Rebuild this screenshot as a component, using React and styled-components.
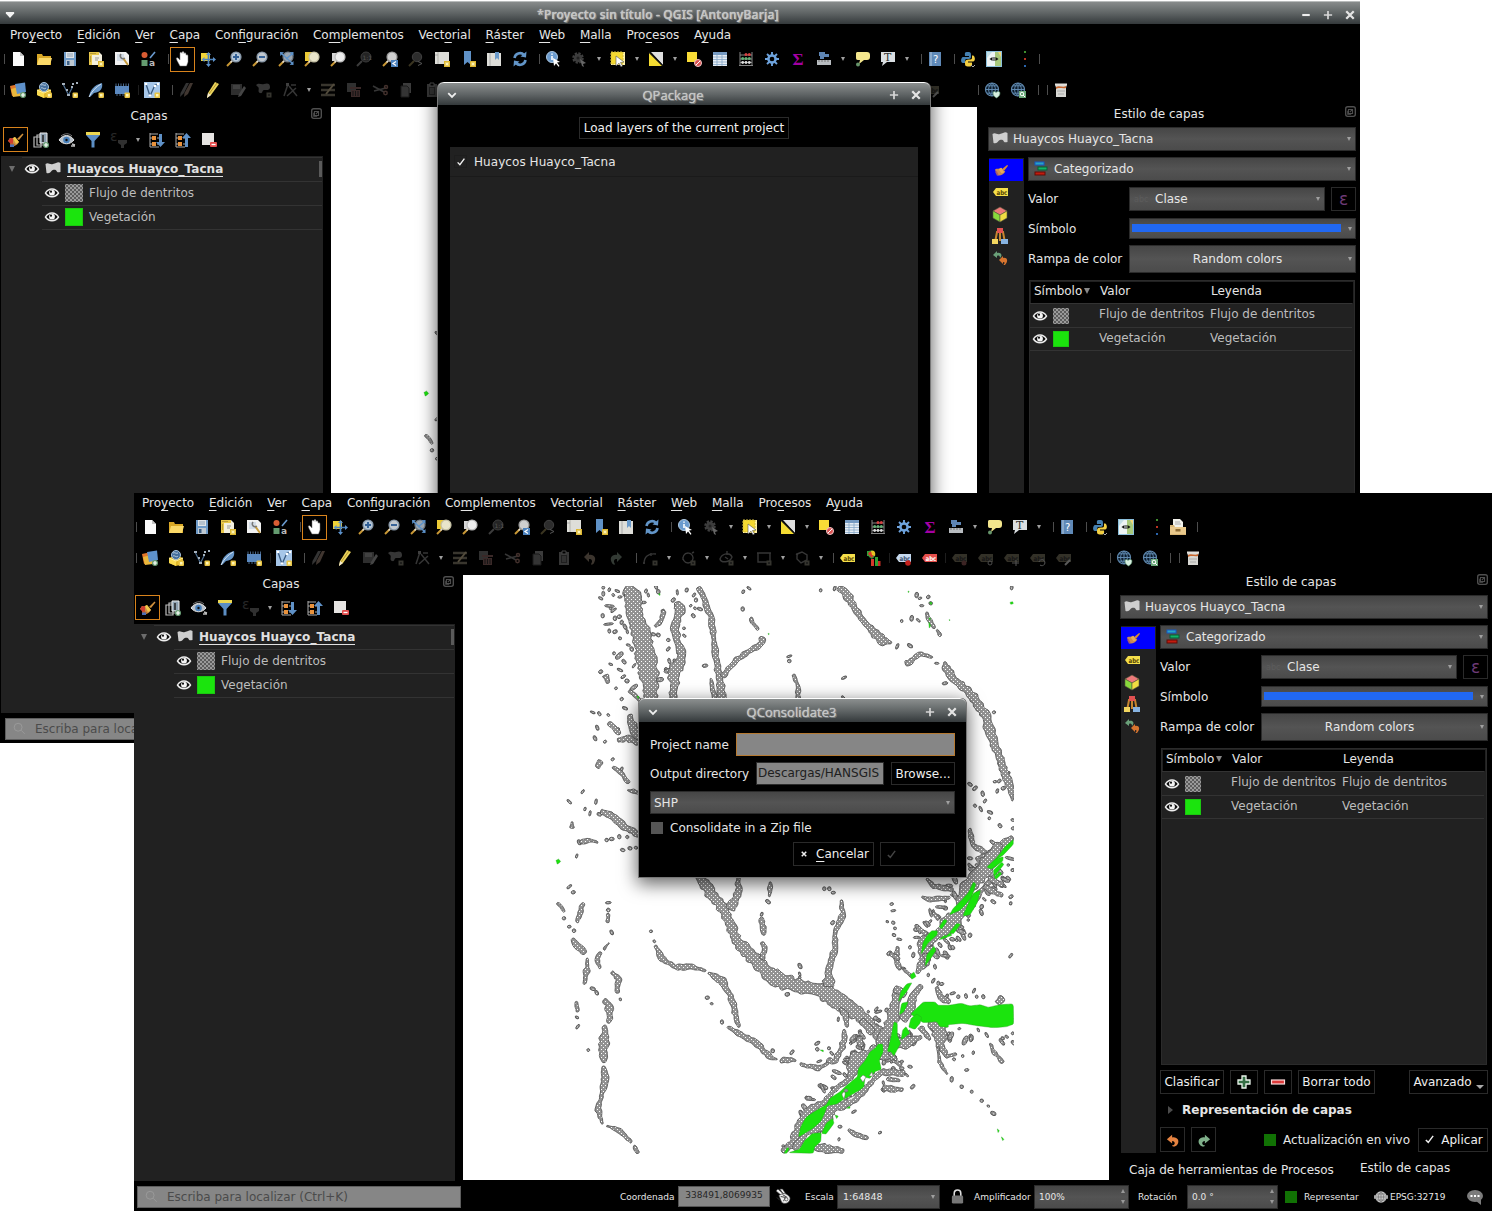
import React from "react";
import styled, { createGlobalStyle, css } from "styled-components";

const Global = createGlobalStyle`
  * { box-sizing: border-box; }
  html, body { margin: 0; padding: 0; background: #fff; }
  body { font: 12px/14px "DejaVu Sans", sans-serif; color: #e6e6e6; }
`;

/* ---------- shared surfaces ---------- */

const Desktop = styled.main`
  position: relative;
  width: 1492px;
  height: 1211px;
  overflow: hidden;
  background: #fff;
`;

const Frame = styled.section`
  position: absolute;
  left: ${(p) => p.$x}px;
  top: ${(p) => p.$y}px;
  width: 1360px;
  height: 743px;
  display: flex;
  flex-direction: column;
  background: #000;
  ${(p) => p.$cropped && css`clip-path: inset(25px 0 0 2px);`}
`;

const titleSurface = css`
  background: linear-gradient(#8b8f8f, #5d6263 55%, #34393b);
  border-top: 1px solid #fff;
`;

const TitleBar = styled.header`
  flex: none;
  height: 24px;
  display: flex;
  align-items: center;
  padding: 4px 4px 0 4px;
  ${titleSurface}
  box-shadow: inset 0 1px #b8bbbb;
`;

const TitleText = styled.span`
  flex: 1;
  text-align: center;
  white-space: nowrap;
  font: ${(p) => (p.$bold ? "600 12px" : "400 13px")}/16px "Noto Sans", sans-serif;
  letter-spacing: ${(p) => (p.$bold ? 0.14 : 0)}px;
  color: #c3c5c5;
  text-shadow: 1px 1px 0 #777c7d, 0 0 1px #eee;
`;

const Buttons = styled.div`
  display: flex;
  gap: 10px;
  align-items: center;
`;

const MenuBar = styled.nav`
  flex: none;
  height: 21px;
  display: flex;
  gap: 14.75px;
  padding: 4px 0 0 10px;
`;

const MenuItem = styled.span`
  white-space: nowrap;
  u { text-decoration: underline; text-underline-offset: 3px; text-decoration-thickness: 1px; }
`;

const ToolRow = styled.div`
  flex: none;
  display: flex;
  align-items: center;
  height: ${(p) => p.$h}px;
  padding-bottom: ${(p) => p.$lift || 0}px;
`;

const Tool = styled.span`
  flex: none;
  width: 26px;
  height: 25px;
  display: flex;
  align-items: center;
  justify-content: center;
  ${(p) => p.$active && css`box-shadow: inset 0 0 0 1px #d8831c; margin: 0 0 0 1px; width: 25px;`}
`;

const Sep = styled.i`
  flex: none;
  width: ${(p) => p.$w}px;
  height: 10px;
  border-right: 1px solid ${(p) => (p.$thin ? "#1e1e1e" : "#4d4d4d")};
`;

const Caret = styled.i`
  flex: none;
  width: ${(p) => p.$w || 12}px;
  display: flex;
  justify-content: center;
  &::after {
    content: "";
    border: 2px solid transparent;
    border-top: 4px solid ${(p) => p.$c || "#a0a0a0"};
    border-bottom: 0;
  }
`;

/* ---------- icons ---------- */

const badge = <g><rect x="10" y="10" width="6" height="6" fill="#dcb52d" /><path d="M13 10.8v4.4M10.8 13h4.4M11.5 11.5l3 3M14.5 11.5l-3 3" stroke="#fff8c0" strokeWidth=".8" /></g>;
const badgeSq = <g><rect x="10.5" y="10.5" width="5.5" height="5.5" rx="1" fill="#e9c545" /><rect x="12" y="12" width="2.5" height="2.5" fill="#fff5b5" /></g>;
const plusBadge = <g><circle cx="13" cy="13" r="3" fill="#6ba077" /><path d="M13 11v4M11 13h4" stroke="#fff" strokeWidth="1.2" /></g>;
const dimBadge = <g fill="#35342e"><rect x="10.5" y="10.5" width="5" height="5" /><circle cx="13" cy="13" r="1" fill="#181818" /></g>;
const lens = (fill, rim) => (
  <g>
    <path d="M6 10 1 15" stroke="#c99835" strokeWidth="2" />
    <path d="M4.5 11.5 6.5 9.5" stroke="#ddd" strokeWidth="1.5" />
    <circle cx="10" cy="6" r="5" fill={fill} stroke={rim} strokeWidth="1.2" />
  </g>
);
const label = (bg, fg, extra) => (
  <g>
    <path d="M1 8 4 4h12v8H4z" fill={bg} />
    <text x="4.4" y="10.6" fontSize="6.5" fontWeight="bold" fontFamily="DejaVu Sans" fill={fg} textLength="11" lengthAdjust="spacingAndGlyphs">abc</text>
    {extra}
  </g>
);
const globe = (extra) => (
  <g>
    <circle cx="8" cy="7.5" r="6.5" fill="#0c1c2c" stroke="#5f88ae" strokeWidth="1.2" />
    <path d="M8 1v13M1.5 7.5h13M3 3.8h10M3 11.2h10M8 1C3.500 4 3.500 11 8 14M8 1c4.500 3 4.500 10 0 13" fill="none" stroke="#5f88ae" strokeWidth="1" />
    {extra}
  </g>
);
const shape = (d) => <g><path d={d} fill="none" stroke="#363636" strokeWidth="1.4" />{dimBadge}</g>;

const ART = {
  doc: <g><path d="M3 1h7l4 4v10H3z" fill="#fafafa" /><path d="M10 1v4h4z" fill="#c4c4c4" /></g>,
  open: <g><path d="M1 3h5l1 2h8v9H1z" fill="#d9a827" /><path d="M3 7h13l-2 7H1z" fill="#fbd968" /></g>,
  save: <g><path d="M2 1h12v14H2z" fill="#6f9bc8" /><rect x="4" y="1" width="8" height="6" fill="#dfe4e8" /><rect x="4" y="9" width="8" height="6" fill="#bfc9d2" /><rect x="5" y="10" width="2.500" height="4" fill="#3c5f84" /><path d="M5 3h6M5 5h6" stroke="#8ea2b5" /></g>,
  layout: <g><path d="M1 1h10l3 3v10H1z" fill="#f4f0de" /><path d="M1 1h10v3H4v10H1z" fill="#e8c74b" /><path d="M3 2v1M5 2v1M7 2v1M2 6h1M2 8h1M2 10h1" stroke="#8a7020" /><path d="M7 7h4M7 9h3" stroke="#999" />{badge}</g>,
  manager: <g><path d="M1 1h11l3 3v10H1z" fill="#f1f1f1" /><path d="M3 3h7v7H3z" fill="#d3dce6" /><path d="m9 7 5 7" stroke="#c79b3b" strokeWidth="2" /><path d="M7 3c-2 3 1 6 4 4" stroke="#777" strokeWidth="1.5" fill="none" /></g>,
  style: <g><circle cx="4.500" cy="4" r="3" fill="#d95c33" /><path d="m10 7 5-6" stroke="#6a9bd0" strokeWidth="1.6" /><rect x="1.500" y="9" width="6" height="6" fill="#649c70" /><text x="9" y="15" fontSize="9" fontWeight="bold" fontFamily="DejaVu Sans" fill="#bbb">a</text></g>,
  hand: <path d="M5 15 2 9.500 1.200 7l1.600-.2L5 9V2.300c0-1.400 1.800-1.400 2 0V1.500C7.200.2 8.900.3 9 1.500v1C9.300 1.400 10.800 1.600 11 3v1.200c.5-.9 2-.6 2 .7V11l-1.500 4z" fill="#fff" stroke="#777" strokeWidth=".5" />,
  pan: <g><path d="M1 2h9v8H1z" fill="#f1d437" /><path d="M8.500 3v11M3 8.500h11" stroke="#4c82bd" strokeWidth="1.700" /><path d="m8.500 1 2.500 3H6zM8.500 16l2.500-3H6zM16 8.500 13 6v5zM1.500 8.500l3-2.500v5z" fill="#5d92ca" /></g>,
  zoomIn: <g>{lens("#b4c6d8", "#8797a8")}<path d="M10 3v6M7 6h6" stroke="#315f96" strokeWidth="1.900" /></g>,
  zoomOut: <g>{lens("#c2c8ce", "#8797a8")}<path d="M7 6h6" stroke="#315f96" strokeWidth="1.900" /></g>,
  zoomFull: <g>{lens("#9aa5b0", "#6f7983")}<path d="m2 1 4 .3L2.300 5zM15.500 1v4L11.500 1.300zM15.500 14v-4l-4 3.700z" fill="#5d92ca" /><path d="m4 3 10 9M14 3 8 8" stroke="#5d92ca" strokeWidth="1.500" /></g>,
  zoomSel: <g><path d="M1 1h8v9H1z" fill="#ecca35" />{lens("#e9e5cb", "#c4c0a4")}</g>,
  zoomLayer: <g><path d="M2 2h7v8H2z" fill="#d6d6d6" />{lens("#eeeeee", "#bcbcbc")}</g>,
  native: <g stroke="#3c3c3c" fill="#242424"><circle cx="10" cy="6" r="5" /><path d="m1 15 5-5" strokeWidth="2" /><text x="6.500" y="8.500" fontSize="6" fill="#555" stroke="none" fontFamily="DejaVu Sans">1:1</text></g>,
  zoomLast: <g>{lens("#cfcfcf", "#999")}<rect x="9" y="9" width="7" height="7" fill="#4c82bd" /><path d="m14 10.500-3 2 3 2" fill="none" stroke="#fff" strokeWidth="1.300" /></g>,
  zoomNext: <g><circle cx="9" cy="6" r="4.700" fill="#2d2d2d" stroke="#414141" /><path d="m1 15 5-5" stroke="#3a3520" strokeWidth="2" /><path d="m10 10.500 4 2-4 2" fill="none" stroke="#555" /></g>,
  newMap: <g><path d="M1 1h14v12H1z" fill="#deded9" /><path d="M4 1v12" stroke="#b2b2ac" /><path d="M1 4h3" stroke="#aaa" />{badge}</g>,
  bookmark: <g><path d="M4 0h7v14l-3.500-3L4 14z" fill="#5f91c6" />{badge}</g>,
  bookmarks: <g><path d="M1 2h14v13H1z" fill="#deded9" /><path d="M4 2v13" stroke="#aaa" /><path d="M9 1h4v8l-2-2-2 2z" fill="#6b9bcb" /></g>,
  refresh: <g fill="none" stroke="#6295c8" strokeWidth="2.600"><path d="M2.500 7A5.500 5.500 0 0 1 12 4" /><path d="M13.500 9A5.500 5.500 0 0 1 4 12" /><path d="m14.500.5-.5 6-5.500-1zM1.500 15.500l.5-6 5.500 1z" fill="#6295c8" stroke="none" /></g>,
  identify: <g><circle cx="7" cy="6" r="5.500" fill="#6b9bce" stroke="#afc8e0" /><path d="M7 5v4M7 2.500v1.300" stroke="#fff" strokeWidth="1.600" /><path d="m8 7 7 4-3 .6 2.500 3.400-1 .8-2.500-3.300L9 15z" fill="#fff" /></g>,
  action: <g><circle cx="7" cy="7" r="4.500" fill="none" stroke="#3f3f3f" strokeWidth="2.500" strokeDasharray="2.200 1.300" /><circle cx="7" cy="7" r="4.300" fill="#3c3c3c" /><circle cx="7" cy="7" r="1.500" fill="#222" /><path d="m9 8 6 4-3 1 1 3-2-1z" fill="#666" /></g>,
  select: <g><rect x="1" y="1" width="14" height="13" fill="#fff2a8" /><rect x="1" y="1" width="12" height="12" fill="#f5d931" stroke="#d1bb3f" strokeDasharray="2 1" /><path d="m6 5 8 6-3.500.5 2 3.500-1.500.8-2-3.600L6 15z" fill="#fff" stroke="#555" strokeWidth=".6" /></g>,
  selectVal: <g><path d="M1 1v14h14z" fill="#f5dc32" /><path d="M3 1h12v13z" fill="#dfdfdf" /><path d="m1 1 14 14" stroke="#111" strokeWidth="1.500" /></g>,
  deselect: <g><rect x="1" y="1" width="10" height="10" fill="#f9dc36" /><circle cx="12" cy="12" r="3.500" fill="#db5353" stroke="#f2caca" /><path d="m10 14 4-4" stroke="#fff" /></g>,
  table: <g><rect x="1" y="1" width="14" height="14" fill="#e6edf4" /><path d="M1 1h14v3H1z" fill="#759ac2" /><path d="M1 6h14M1 8.500h14M1 11h14M1 13.500h14M5 4v11M10 4v11" stroke="#87a7c8" strokeWidth=".8" /></g>,
  abacus: <g><path d="M2 1v14M14 1v14M1 14.500h14M2 4h12M2 8h12M2 11.500h12" stroke="#858585" strokeWidth="1" /><g fill="#d34141"><circle cx="8" cy="3.500" r="1.500" /><circle cx="11.300" cy="3.500" r="1.500" /></g><g fill="#63af75"><circle cx="4.700" cy="7.500" r="1.500" /><circle cx="8" cy="7.500" r="1.500" /><circle cx="11.300" cy="7.500" r="1.500" /></g><g fill="#ddd"><circle cx="4.700" cy="11.500" r="1.400" /><circle cx="8" cy="11.500" r="1.400" /><circle cx="11.300" cy="11.500" r="1.400" /></g></g>,
  gear: <g fill="none" stroke="#6ea3dd"><circle cx="8" cy="8" r="3.600" strokeWidth="2.500" /><path d="M8 1v3M8 12v3M1 8h3M12 8h3M3 3l2.200 2.200M10.800 10.800 13 13M13 3l-2.200 2.200M5.200 10.800 3 13" strokeWidth="1.900" /></g>,
  sigma: <text x="2.500" y="14" fontSize="17" fontFamily="Liberation Serif" fontWeight="bold" fill="#a400a4">Σ</text>,
  measure: <g><path d="M3 1h6v2h4v3H8v2H4V5H3z" fill="#5e85b4" /><rect x="1" y="9" width="14" height="5" fill="#b8bcc0" /><path d="M3 9v2M6 9v2M9 9v2M12 9v2" stroke="#777" /></g>,
  tip: <g><path d="M2 2.500C2 1 3 1 4 1h9c2 0 3 1 3 3v2c0 2-1 3-3 3h-3l-5 4 1-4H4C2 9 2 8 2 6z" fill="#f4e68d" /><circle cx="4" cy="13.500" r="2" fill="#67956b" /></g>,
  note: <g><path d="M1 1h14v10H7l-5 4 1-4H1z" fill="#dadfe2" /><text x="4" y="10" fontSize="11" fontFamily="DejaVu Serif" fill="#333">T</text></g>,
  help: <g><rect x="2" y="1" width="12" height="14" fill="#5f89b7" /><path d="M4 1v14" stroke="#b6cade" /><text x="6" y="12" fontSize="10" fontFamily="DejaVu Sans" fill="#fff">?</text></g>,
  python: <g><path d="M8 1c-4 0-3 1.500-3 4h4v1H3c-2 0-3 6 0 6h2v-2c0-2 1-2 3-2 3 0 3-1 3-3 0-3 0-4-3-4z" fill="#4580b1" /><path d="M9 15.500c4 0 3-1.500 3-4H8v-1h5c3 0 2-6 0-6h-1v2c0 2-1 2-3 2-3 0-4 1-4 3 0 3 0 4 4 4z" fill="#f3cf42" /><path d="m11 14 2 2 2-2" fill="none" stroke="#aaa" /></g>,
  swipe: <g><rect x=".5" y=".5" width="15" height="15" fill="#eef4f5" stroke="#8cc0dc" /><path d="M9 1h6v14H9z" fill="#a8c97c" /><path d="m12 1 3 5V1z" fill="#f5d77a" /><path d="M1 7l5-6H1z" fill="#c4dfe7" /><path d="M8 6v4" stroke="#111" /><path d="M6.500 6v4L3.500 8zM9.500 6v4l3-2z" fill="#111" /></g>,
  dots: <g><rect x="12" y="0" width="2" height="2" fill="#3f8d2f" /><rect x="12" y="7" width="2" height="2" fill="#b93322" /><rect x="12" y="14" width="2" height="2" fill="#2b65ad" /></g>,
  drawer: <g><path d="M3 0h7l3 3v5H3z" fill="#f3f3ed" /><path d="M5 3h5M5 5h6" stroke="#aaa" /><path d="M0 6h4l1 2h11v8H0z" fill="#d9b676" /><path d="M0 8h16v7H0z" fill="#e9c98c" /><rect x="5.500" y="10" width="5" height="2.500" fill="#8e6c35" /></g>,

  addLayer: <g><path d="m0 4 9-2 2 10-9 2z" fill="#e2772b" /><path d="m1 7 8-2 2 9-8 1z" fill="#e9b73c" /><path d="m5 2 10-1.500L16 10 7 12z" fill="#5e91ca" />{plusBadge}</g>,
  geopkg: <g><path d="M1 8 8 5l7 3v6l-7 2-7-3z" fill="#e2b928" /><path d="m1 8 7 3v5l-7-3z" fill="#fadb50" /><circle cx="8" cy="5" r="4.500" fill="#436d9b" stroke="#a9c4de" /><path d="M5 3c2-1 3 1 5 0M5 6c2-1 3 2 5 0" fill="none" stroke="#c8d9e8" strokeWidth=".9" /><path d="m1 8 7 3 7-3" fill="none" stroke="#fff0a0" strokeWidth="1" />{badgeSq}</g>,
  shp: <g><path d="m1.500 3 5 10 4-8" fill="none" stroke="#4c6d8f" strokeWidth="1.200" /><g fill="#a4b0bc"><rect x="0" y="1" width="3" height="2" /><rect x="4" y="7" width="2" height="2" /><rect x="5" y="12" width="3" height="2" /><rect x="9" y="4" width="2" height="2" /><rect x="10" y="1" width="2" height="2" /><rect x="14" y="0" width="2" height="2" /></g>{badgeSq}</g>,
  feather: <g><path d="M1 15C2 8 6 3 14 1c1 5-1 9-8 10L2 15z" fill="#6897c8" /><path d="M1 15C4 9 8 5 13 2" stroke="#d6e2ee" fill="none" />{badgeSq}</g>,
  memory: <g><path d="M1 4h14v8H1z" fill="#5b89c0" /><path d="M2 1.500v2.500M4.500 1.500v2.500M7 1.500v2.500M9.500 1.500v2.500M12 1.500v2.500M14.500 1.500v2.500M3 12v2M6 12v2M9 12v2" stroke="#54749a" strokeWidth=".9" />{badgeSq}</g>,
  virtual: <g><rect x="0" y="0" width="16" height="16" fill="#a6c6e8" /><path d="M2 2 6 14 11 3l4-1" fill="none" stroke="#38597e" strokeWidth="1.300" /><g fill="#fff"><circle cx="2" cy="2" r="1.300" /><circle cx="6" cy="13.500" r="1.300" /><circle cx="11" cy="4" r="1.300" /><circle cx="14" cy="2" r="1.300" /></g>{badgeSq}</g>,
  edits: <g fill="#343434"><path d="M8 1h3L6 11l-4 4 .5-4z" /><path d="M12 1h3L10 12l-4 3 .500-4z" fill="#403630" /></g>,
  pencil: <g><path d="m11 0 4 2-8 11-4 3 1-5z" fill="#ead45c" /><path d="m13 1-8 11" stroke="#b69530" /><path d="m4 11 3 2-4 3z" fill="#f4ead0" /></g>,
  saveEdit: <g fill="#2e2e2e"><path d="M1 2h11v11H1z" /><path d="M3 3h7v4H3z" fill="#414141" /><path d="m9 12 5-8 2 2-5 8-3 1z" fill="#454545" /></g>,
  addShape: <g><path d="M0 3c3-3 5 0 8-1s6-1 6 3-4 3-6 3-1 4-4 3 0-5-2-6z" fill="#363636" />{dimBadge}</g>,
  vertex: <g><path d="M2 14 6 2M7 4l8 10M14 6 5 14M9 3h5" stroke="#363636" strokeWidth="1.500" fill="none" /><rect x="4" y="1" width="3" height="3" fill="#3f3f3f" /></g>,
  multi: <g stroke="#39362e" strokeWidth="2.600" fill="none"><path d="M1 3h14M1 8h14M1 13h14" /><path d="m14 2-8 10" stroke="#524b3c" strokeWidth="2" /></g>,
  trash: <g fill="#3a2928"><rect x="1" y="1" width="9" height="9" fill="#303030" /><path d="M4 5h11v2H4zM5 8h9v7H5z" /><path d="M7 9v5M9.500 9v5M12 9v5" stroke="#151515" /></g>,
  cut: <g fill="none" stroke="#363636" strokeWidth="1.500"><path d="m1 4 11 6M2 9l12-3" /><circle cx="13.500" cy="11" r="1.700" stroke="#42302c" /><circle cx="14" cy="5" r="1.500" stroke="#42302c" /></g>,
  copy: <g><path d="M5 1h8v10H5z" fill="#3b3b3b" /><path d="M3 4h6l2 2v9H3z" fill="#343434" stroke="#1a1a1a" /></g>,
  paste: <g><path d="M3 2h10v13H3z" fill="#363636" /><path d="M5 5h6v8H5z" fill="#1f1f1f" /><path d="M6 1h4v3H6zM6 7h4M6 9h4M6 11h4" stroke="#444" /></g>,
  undo: <path d="M2 7l5-5v3c5-1 8 3 5 8-1 2-3 2-3 1 2-3 1-5-2-5v3z" fill="#3c352e" />,
  redo: <path d="M14 7 9 2v3C4 4 1 8 4 13c1 2 3 2 3 1-2-3-1-5 2-5v3z" fill="#333a34" />,
  curve: shape("M2 14C2 7 6 3 14 4M1 13h2M9 3v3"),
  circle: shape("M8 3a5 5 0 1 0 .1 0M3 7v3M12 3l2-1"),
  ellipse: shape("M2 9c2-6 10-7 12-2-2 6-11 6-12 2zM7 7l3 2M9 1v4"),
  rect: shape("M2 3h12v9H2zM1 3h2M13 3h2"),
  polygon: shape("m3 4 5-2 5 3v5l-6 3-4-4zM2 4l2 1"),
  abc: label("#f5df4a", "#554600"),
  colors: <g><rect x="2" y="1" width="3" height="5" fill="#35a537" /><path d="M2 3c2-4 9-3 8 2-1 4-3 3-3 4L4 7z" fill="#2f9d38" /><path d="M3 4c1-4 6-3 6 1L7 8z" fill="#d43a2a" /><path d="M6 1c3-1 5 1 4 5L7 5z" fill="#e8c623" /><rect x="6" y="9" width="3" height="7" fill="#d93a2b" /><rect x="10" y="7" width="3" height="9" fill="#32a232" /><rect x="13" y="11" width="2.500" height="5" fill="#c62f25" /></g>,
  abcBlue: label("#c6d9ef", "#3a5373", <circle cx="13" cy="13" r="2.800" fill="#c3201c" />),
  abcRed: label("#e6504c", "#fff"),
  abcPin: label("#333128", "#161616", <circle cx="13" cy="13" r="2.500" fill="#3c2424" />),
  abcRing: label("#333128", "#161616", <circle cx="13" cy="13" r="2" fill="none" stroke="#4b4b4b" />),
  abcMove: label("#333128", "#161616", <path d="M9 13h7M13 10v6" stroke="#555" />),
  abcTurn: label("#333128", "#161616", <path d="M10 12a3 3 0 1 1 1 3" stroke="#555" fill="none" />),
  abcEdit: label("#333128", "#161616", <path d="m10 15 5-5" stroke="#5a5a5a" strokeWidth="2" />),
  globeAdd: globe(<path d="M9 11c0-2 2-2 3-.5 1-1.500 4-1.500 4 .5 0 3-2 4-3.500 5C11 15 9 14 9 11z" fill="#d7efe0" stroke="#538b67" strokeWidth=".6" />),
  globeFind: globe(<g><rect x="9" y="9" width="7" height="7" fill="#69a878" /><circle cx="12" cy="12" r="1.800" fill="none" stroke="#fff" /><path d="m13 13 2 2" stroke="#fff" /></g>),
  bucket: <g><path d="M2 2h12l-1 4v9H3V6z" fill="#d7d7d3" /><path d="M2 1.500h12v2H2z" fill="#e2e0dc" /><path d="M3 5c3-2 7 1 10-1v2c-3 1-7-1-10 1z" fill="#c9662d" /><path d="M4 9h8M5 12h6" stroke="#aaa" /></g>,

  brush: <g><path d="M2 6c2 1 3 0 5-1l4 5c-2 4-6 5-9 4 1-2 0-4-2-5z" fill="#cb9045" /><path d="M2 6c1 1 2 0 3 0l0 8H2c1-2 0-4-2-5z" fill="#d13c2f" /><path d="M5 6l2-1 4 5-3 2z" fill="#f2c84b" /><path d="m9 7 5.500-5.500 1 1L11 8z" fill="#d0913d" /><path d="m3 11 4 1-1 2.500H3z" fill="#b8672a" /><path d="M2 12.500h4V15H2z" fill="#4b6fb5" /></g>,
  brushSel: <g><path d="M1 7c2-2 4 0 6-2l5 4c-2 4-6 5-9 4 1-1-1-3-2-6z" fill="#c98a52" /><path d="m8 7 6-5 1 1-4 5z" fill="#d88b35" /><path d="M5 7 8 5l3 5-3 1z" fill="#e7aa57" /><path d="M2 9l2 4" stroke="#a65a6b" strokeWidth="2" /></g>,
  addGroup: <g><path d="M1 5h7v10H1zM4 3h7v10H4z" fill="none" stroke="#bcbcbc" strokeWidth="1.200" /><path d="M7 1h7v10H7z" fill="#8ea0b0" stroke="#eee" /><path d="M10 3v7" stroke="#222" strokeWidth="1.500" />{plusBadge}</g>,
  eyeTool: <g><path d="M0 8c4-6 11-6 15 0-4 5-11 5-15 0z" fill="#b7c0c9" stroke="#e1e1e1" /><circle cx="7.500" cy="8" r="3.300" fill="#4980ba" /><circle cx="7.500" cy="8" r="1.200" fill="#111" /><path d="M2 4c4-3 8-3 11 0" stroke="#777" fill="none" /><path d="M12 14h4M13 12l3 1" stroke="#bbb" strokeWidth="1.500" /></g>,
  filter: <g><path d="M1 3h14L9.500 9v6.500h-3V9z" fill="#5c8ec4" /><path d="M1 0h14v3H1z" fill="#ecd751" /></g>,
  exprFilter: <g><text x="-1" y="9" fontSize="14" fontFamily="DejaVu Sans" fill="#272727">ε</text><path d="M7 8h9v3l-3 2v3h-3v-3l-3-2z" fill="#303030" /></g>,
  expand: <g><path d="M1 1v14M1 2h8M1 6h4M1 12h4M8 6h4M8 12h4M1 15h9" stroke="#aaa" /><rect x="3" y="4" width="4" height="4" fill="#e9923c" /><rect x="3" y="10" width="4" height="4" fill="#e9923c" /><path d="M10 2h3v8h3l-4.500 5L7 10h3z" fill="#5f91c7" /></g>,
  collapse: <g><path d="M1 1v14M1 2h8M1 6h4M1 12h4M8 6h4M8 12h4M1 15h9" stroke="#aaa" /><rect x="3" y="4" width="4" height="4" fill="#e9923c" /><rect x="3" y="10" width="4" height="4" fill="#e9923c" /><path d="M10 15h3V6h3L11.500 1 7 6h3z" fill="#5f91c7" /></g>,
  removeLayer: <g><rect x="1" y="1" width="12" height="12" fill="#e6e4e2" /><rect x="9" y="10" width="7" height="5" rx="1" fill="#e34e4e" /><path d="M10.500 12.500h4" stroke="#fff" strokeWidth="1.300" /></g>,
  poly: <path d="M.500 3c3-2 4 1 7.500 0s5-3 7.500-1v9c-2 0-3 1-4-1s-4-1-5 0-2 3-5 2z" fill="#cfcfcf" />,
  eye: <g><path d="M1.500 8c3-5.500 10-5.500 13 0-3 5-10 5-13 0z" fill="#111" stroke="#eee" strokeWidth="1.500" /><circle cx="8" cy="7.700" r="2.900" fill="#f4f4f4" /><circle cx="7" cy="6.700" r="1.100" fill="#111" /></g>,
  tagYellow: label("#f5df4a", "#554600"),
  cube: <g stroke="#5a5a3c" strokeWidth=".6"><path d="m8 1 7 4-7 4-7-4z" fill="#ed7a7a" /><path d="m1 5 7 4v7l-7-4z" fill="#88d93c" /><path d="m15 5-7 4v7l7-4z" fill="#f1dc42" /></g>,
  diagram: <g><path d="M3.500 12 5 4h6l1.500 8M8 5v8" fill="none" stroke="#c7862f" strokeWidth="2" /><rect x="5" y="0" width="6" height="5" fill="#e25151" /><rect x="0" y="11" width="6" height="5" fill="#f3d760" /><rect x="9" y="11" width="7" height="5" fill="#88b4e2" /></g>,
  history: <g><path d="m1 5 4-4v2c4-1 6 2 3 5 0-2-1-3-3-2v2z" fill="#6aa079" /><path d="m7 10 4-4v2c4-1 6 3 2 7-1 0-2 0-1-1 1-1 1-2-1-2v2z" fill="#d8752f" /></g>,
  categories: <g strokeWidth="1"><rect x="2" y="1" width="9" height="3" fill="#2aa4c4" stroke="#1559c4" /><rect x="5" y="6" width="9" height="3" fill="#12b466" stroke="#075f36" /><rect x="2" y="11" width="10" height="3" fill="#c31b0e" stroke="#610c07" /></g>,
  plus: <path d="M6 2h4v4h4v4h-4v4H6v-4H2V6h4z" fill="#356f45" stroke="#eaf5ec" strokeWidth="1.300" />,
  minus: <rect x="1.500" y="6" width="13" height="4" fill="#dd3a3a" stroke="#f7dada" strokeWidth="1.200" />,
  undoOrange: <path d="M1 7l6-5v3c6-1 9 4 6 8-2 3-6 3-6 1 4 0 4-5 0-5v3z" fill="#e58341" />,
  redoGreen: <path d="M15 7 9 2v3C3 4 0 9 3 13c2 3 6 3 6 1-4 0-4-5 0-5v3z" fill="#7fb08a" />,
  check: <path d="m3.500 8.500 3 3 6-8" fill="none" stroke="currentColor" strokeWidth="1.800" />,
  cross: <path d="m5 5 6 6M11 5l-6 6" stroke="currentColor" strokeWidth="2" />,
  lock: <g><path d="M4.500 8V4.500c0-4.500 7-4.500 7 0V8" fill="none" stroke="#ddd" strokeWidth="1.700" /><rect x="2" y="7" width="12" height="8.500" rx="1.500" fill="#777" /></g>,
  mouse: <g fill="#eee" stroke="#333" strokeWidth=".7"><path d="m0 2 2-2 7 6-2 2zM4 0l3 0 4 6-2 1z" /><path d="M3 7l3 7c2 2 6 2 8-1s1-5-2-7-6-1-9 1z" /><path d="m5 8 5 1-2 4M7 6l5 3M1 9l3 3" fill="none" strokeWidth="1" /><circle cx="11" cy="11" r="1.700" /></g>,
  crs: <g><circle cx="8" cy="8" r="6.500" fill="#c8c8c8" /><path d="M1 8h14M8 1v14M3 4.500h10M3 11.500h10M8 2C4 5 4 11 8 14M8 2c4 3 4 9 0 12" fill="none" stroke="#666" strokeWidth=".7" /><path d="M0 6h4v4H0zM12 6h4v4h-4z" fill="#aaa" /></g>,
  bubble: <g><ellipse cx="8" cy="7" rx="8" ry="6" fill="#7c7c7c" /><path d="m9 12 5 4v-6z" fill="#7c7c7c" /><path d="M3.500 7h2M7 7h2M10.500 7h2" stroke="#fff" strokeWidth="2" /></g>,
  search: <g fill="none" stroke="#9b9b9b" strokeWidth="1"><circle cx="7" cy="6" r="4.500" /><path d="m10.500 9.500 4 4" /></g>,
  float: <g fill="none" stroke="#4f4f4f"><rect x="1" y="1" width="14" height="14" rx="3" strokeWidth="2" /><path d="M5 5h6v6H5zM4 7v5h5M7 9l4-4" strokeWidth="1.500" /></g>,
  winMenu: <path d="M2.500 4h11v2L8 12 2.500 6z" fill="#f2f2f2" />,
  chevron: <path d="m3 5.500 5 5 5-5" fill="none" stroke="#eee" strokeWidth="2.400" />,
  winMin: <path d="M3 8h10" stroke="#eee" strokeWidth="2.800" />,
  winMax: <path d="M8 2.500v11M2.500 8h11" stroke="#d6d6d6" strokeWidth="2.300" />,
  winClose: <path d="m3 3 10 10M13 3 3 13" stroke="#e4e4e4" strokeWidth="3" />,
};

const Svg = styled.svg`
  flex: none;
  display: block;
  overflow: visible;
`;
const Icon = ({ name, size = 16 }) => <Svg width={size} height={size} viewBox="0 0 16 16">{ART[name]}</Svg>;

/* ---------- toolbars ---------- */

const MENU = [["Pro", "y", "ecto"], ["", "E", "dición"], ["", "V", "er"], ["", "C", "apa"], ["Con", "f", "iguración"], ["Co", "m", "plementos"], ["Vect", "o", "rial"], ["", "R", "áster"], ["", "W", "eb"], ["", "M", "alla"], ["Pro", "c", "esos"], ["A", "y", "uda"]];

const MAIN_TOOLS = "|5 doc open save layout manager style |8 *hand pan zoomIn zoomOut zoomFull zoomSel zoomLayer native zoomLast zoomNext newMap bookmark bookmarks refresh |7 identify action v13 select v12 selectVal v12 deselect table abacus gear sigma measure v12 tip note v12 |9 help |7 python swipe dots";
const EDIT_TOOLS = "|5 addLayer geopkg shp feather memory :4 virtual |8 edits pencil saveEdit addShape vertex v12 multi trash cut copy paste undo redo |8 curve v12 circle v12 ellipse v12 rect v12 polygon v12 |7 abc colors :4 abcBlue abcRed :4 abcPin abcRing abcMove abcTurn abcEdit |35 globeAdd globeFind |8 |9 bucket";

const Toolbar = ({ items, h, lift }) => (
  <ToolRow $h={h} $lift={lift}>
    {items.split(" ").map((t, i) => {
      if (t[0] === "|") return <Sep key={i} $w={+t.slice(1)} />;
      if (t[0] === ":") return <Sep key={i} $w={+t.slice(1)} $thin />;
      if (/^v\d/.test(t)) return <Caret key={i} $w={+t.slice(1)} />;
      if (t[0] === "*") return <Tool key={i} $active><Icon name={t.slice(1)} /></Tool>;
      return <Tool key={i}><Icon name={t} /></Tool>;
    })}
  </ToolRow>
);

/* ---------- layers dock ---------- */

const Body = styled.div`
  flex: 1;
  min-height: 0;
  display: flex;
`;
const LayersDock = styled.aside`
  flex: none;
  width: 331px;
  padding-right: 8px;
  display: flex;
  flex-direction: column;
`;
const DockTitle = styled.div`
  flex: none;
  height: 20px;
  display: flex;
  align-items: flex-start;
  padding: 2px ${(p) => p.$r}px 0 0;
`;
const DockName = styled.span`
  flex: 1;
  text-align: center;
  padding: 1px ${(p) => p.$r}px 0 0;
`;
const LayerTools = styled.div`
  flex: none;
  height: 27px;
  padding-left: 2px;
  display: flex;
  align-items: center;
`;
const Tree = styled.div`
  flex: 1;
  margin: 3px 0 0 1px;
  padding: 1px 1px 0 0;
  background: #212121;
`;
const TreeRow = styled.div`
  display: flex;
  height: 24px;
  padding-left: ${(p) => (p.$child ? 41 : 0)}px;
`;
const Expander = styled.span`
  width: 21px;
  display: flex;
  align-items: center;
  padding-left: 8px;
  &::after { content: ""; border: 3.5px solid transparent; border-top: 6px solid #6d6d6d; border-bottom: 0; }
`;
const TreeCell = styled.div`
  flex: 1;
  display: flex;
  align-items: center;
  gap: 5px;
  padding: 0 0 1px 2px;
  color: #bdbdbd;
  border-top: 1px solid #333;
  ${(p) => p.$last && css`box-shadow: 0 1px #333;`}
  b { margin-left: 1px; flex: 1; color: #e0e0e0; letter-spacing: 0.08px; }
  b span { border-bottom: 1px solid #e0e0e0; }
  em { font-style: normal; margin-left: 1px; }
`;
const Swatch = styled.i`
  flex: none;
  width: ${(p) => p.$s}px;
  height: ${(p) => p.$s}px;
  background: ${(p) => (p.$green ? "#1be40d" : "#9a9a9a")};
  border: ${(p) => (p.$green ? "1px solid #1bc910" : "0")};
  ${(p) => !p.$green && css`
    background-image: radial-gradient(circle, #3a3a3a 0.6px, transparent 0.9px), radial-gradient(circle, #3a3a3a 0.6px, transparent 0.9px);
    background-size: 4px 4px;
    background-position: 0 0, 2px 2px;
  `}
`;
const Thumb = styled.i`
  width: 3px;
  height: 16px;
  background: #5a5a5a;
`;

const Layers = () => (
  <LayersDock>
    <DockTitle $r={1}><DockName $r={13}>Capas</DockName><Icon name="float" size={11} /></DockTitle>
    <LayerTools>
      <Tool $active><Icon name="brush" /></Tool>
      {["addGroup", "eyeTool", "filter", "exprFilter"].map((n) => <Tool key={n}><Icon name={n} /></Tool>)}
      <Caret $w={12} />
      {["expand", "collapse", "removeLayer"].map((n) => <Tool key={n}><Icon name={n} /></Tool>)}
    </LayerTools>
    <Tree>
      <TreeRow><Expander /><TreeCell><Icon name="eye" /><Icon name="poly" /><b><span>Huaycos Huayco_Tacna</span></b><Thumb /></TreeCell></TreeRow>
      <TreeRow $child><TreeCell><Icon name="eye" /><Swatch $s={18} /><em>Flujo de dentritos</em></TreeCell></TreeRow>
      <TreeRow $child><TreeCell $last><Icon name="eye" /><Swatch $s={18} $green /><em>Vegetación</em></TreeCell></TreeRow>
    </Tree>
  </LayersDock>
);

/* ---------- map ---------- */

const MapView = styled.div`
  flex: none;
  width: 646px;
  margin: 1px 0;
  background: #fff;
`;

const makeRandom = (seed) => () => {
  seed = (seed * 1664525 + 1013904223) % 4294967296;
  return seed / 4294967296;
};

/* x, y, width triples along each flow's centre line; the second set is the lower half of the sheet */
const FLOWS_TOP = [
  [255, 38, 24, 272, 50, 46, 280, 80, 42, 290, 130, 44, 305, 180, 52, 315, 230, 54, 325, 290, 54, 330, 340, 42, 330, 400, 40],
  [412, 80, 16, 420, 105, 28, 405, 150, 20, 410, 200, 20, 428, 240, 24, 405, 285, 36, 402, 330, 22, 398, 378, 20],
  [475, 36, 14, 495, 80, 14, 512, 120, 16, 520, 180, 14, 525, 230, 14, 535, 290, 18, 542, 330, 20, 540, 380, 26],
  [668, 185, 18, 662, 210, 14, 610, 238, 14, 575, 270, 14, 545, 305, 14], [513, 310, 6, 517, 340, 8, 525, 372, 14],
  [895, 36, 14, 920, 58, 22, 940, 90, 18, 965, 130, 14, 1000, 172, 24, 1030, 200, 22, 1055, 203, 8],
  [1095, 265, 12, 1112, 262, 14, 1125, 246, 12, 1145, 238, 12, 1178, 247, 6], [1215, 260, 6, 1220, 280, 24, 1245, 315, 18, 1300, 365, 24, 1335, 420, 24, 1355, 480, 24, 1372, 530, 20, 1395, 595, 18, 1412, 635, 22, 1417, 678, 4],
  [630, 128, 8, 640, 145, 8, 655, 165, 8], [760, 298, 8, 772, 325, 10, 776, 375, 12],
  [370, 105, 10, 365, 135, 14, 345, 155, 10], [268, 345, 8, 285, 362, 10, 300, 378, 10], [270, 418, 10, 278, 450, 22, 300, 500, 20],
  [232, 495, 12, 260, 490, 14, 298, 502, 18], [205, 442, 8, 222, 458, 14, 240, 478, 8], [218, 575, 6, 240, 592, 10, 268, 624, 10],
  [262, 645, 6, 280, 650, 12, 298, 654, 10], [182, 708, 12, 210, 718, 18, 240, 745, 18, 298, 782, 14], [1290, 760, 8, 1298, 810, 14, 1340, 835, 12, 1365, 850, 20],
  [1158, 112, 8, 1170, 140, 12, 1185, 160, 6], [1190, 164, 6, 1202, 184, 8],
  [195, 300, 16, 205, 325, 10], [170, 578, 16, 182, 556, 18], [97, 740, 6, 96, 760, 16], [118, 802, 8, 150, 795, 12, 174, 803, 6],
  [1320, 870, 50, 1355, 840, 34, 1418, 785, 12],
];
const FLOWS_LOW = [
  [475, 45, 20, 505, 90, 30, 545, 140, 26, 570, 190, 22, 590, 240, 26, 650, 305, 34, 700, 352, 46, 760, 375, 36, 850, 392, 42, 905, 430, 54, 960, 462, 36, 1000, 505, 24, 1035, 535, 40],
  [594, 45, 12, 597, 90, 14, 572, 150, 28], [690, 65, 4, 690, 88, 14, 688, 110, 6], [664, 172, 10, 668, 200, 14, 672, 226, 8], [668, 245, 10, 676, 270, 12, 664, 298, 16],
  [902, 120, 6, 910, 160, 16, 885, 215, 10, 885, 270, 16, 868, 325, 14, 865, 380, 36], [345, 256, 8, 365, 295, 14, 405, 322, 12, 455, 322, 14, 498, 332, 6],
  [505, 337, 6, 545, 360, 24, 568, 400, 12, 585, 450, 18, 597, 502, 8], [562, 500, 6, 610, 528, 14, 650, 550, 16, 690, 592, 14, 712, 598, 4], [720, 605, 8, 740, 598, 16, 768, 602, 6],
  [780, 612, 8, 800, 618, 8, 835, 625, 14, 865, 610, 8], [860, 600, 12, 885, 605, 14, 905, 565, 16, 915, 530, 14, 912, 508, 6], [898, 445, 6, 915, 460, 20, 922, 502, 6],
  [50, 130, 6, 62, 138, 8, 73, 156, 6], [130, 128, 6, 122, 150, 12, 112, 188, 8], [97, 235, 8, 112, 258, 20, 137, 280, 12], [142, 294, 6, 141, 330, 14, 132, 373, 8],
  [183, 276, 8, 170, 298, 12, 180, 326, 6], [206, 248, 4, 192, 270, 8], [214, 336, 8, 235, 355, 14, 232, 400, 10], [190, 420, 10, 208, 435, 22, 210, 465, 18, 205, 490, 8],
  [195, 495, 8, 195, 530, 26, 190, 570, 24, 192, 608, 10], [190, 618, 6, 197, 660, 20, 184, 710, 8, 174, 750, 14, 188, 792, 6], [200, 797, 4, 240, 810, 14, 274, 848, 8], [282, 856, 8, 295, 880, 12],
  [110, 424, 6, 112, 456, 10], [205, 160, 6, 203, 188, 10],
  /* banks of the green channel */
  [725, 875, 14, 760, 850, 22, 778, 800, 22, 800, 755, 20, 850, 728, 14, 890, 682, 12, 930, 655, 14, 950, 600, 50, 985, 580, 22, 1010, 560, 16],
  [760, 868, 16, 800, 818, 18, 850, 790, 34, 875, 745, 26, 925, 730, 20, 965, 700, 16, 1000, 660, 14, 1030, 635, 16, 1095, 640, 16],
  [1030, 600, 26, 1035, 550, 46, 1050, 500, 34, 1065, 440, 28, 1075, 385, 24],
  [1062, 385, 14, 1098, 405, 22], [1085, 480, 30, 1110, 450, 26, 1120, 410, 16, 1145, 375, 10],
  [1130, 340, 6, 1155, 300, 30, 1155, 245, 44, 1195, 225, 24, 1235, 185, 50, 1265, 160, 30, 1275, 95, 44, 1310, 50, 44, 1350, 5, 44, 1380, -50, 18],
  [1280, 165, 10, 1320, 95, 14, 1370, 40, 12],
  [820, 858, 22, 860, 868, 26, 912, 872, 12], [1045, 545, 30, 1090, 550, 30, 1145, 530, 12], [1140, 500, 14, 1170, 540, 8],
  [1190, 380, 6, 1200, 410, 18, 1230, 428, 12], [1165, 490, 20, 1195, 500, 46, 1200, 555, 24, 1218, 590, 10, 1250, 582, 8], [1195, 560, 6, 1197, 605, 8, 1222, 643, 6],
  [1350, 550, 6, 1365, 580, 10, 1390, 608, 10], [1160, 55, 6, 1180, 78, 12, 1240, 90, 12], [1145, 110, 10, 1170, 120, 16, 1230, 112, 8], [1345, 55, 12, 1390, 75, 14], [1330, 80, 12, 1388, 108, 12],
  [1075, 260, 10, 1068, 290, 16, 1080, 330, 8], [1050, 278, 8, 1078, 300, 10], [1090, 325, 6, 1115, 350, 10],
  [1160, 280, 20, 1162, 318, 10], [1028, 685, 18, 1090, 688, 10], [1040, 655, 8, 1080, 662, 8], [925, 808, 8, 945, 822, 12, 985, 835, 8], [1370, 430, 16, 1390, 412, 18],
  [955, 530, 12, 965, 560, 14], [962, 480, 20, 1000, 520, 20], [1055, 600, 8, 1085, 616, 10], [1050, 575, 12, 1070, 600, 10], [1125, 195, 6, 1160, 225, 14], [1180, 155, 6, 1195, 180, 10],
];
/* small islands: x, y pairs */
const SPOTS_TOP = [190, 38, 208, 44, 220, 60, 182, 70, 190, 56, 232, 48, 240, 66, 318, 48, 325, 60, 348, 35, 355, 50, 188, 122, 212, 100, 225, 130, 238, 125, 245, 142, 208, 168, 225, 170, 255, 155, 262, 170, 240, 190, 265, 210, 275, 222, 222, 235, 212, 268, 252, 260, 282, 272, 240, 285, 250, 305, 182, 290, 228, 340, 245, 372, 255, 400, 158, 412, 178, 416, 172, 458, 205, 420, 235, 462, 165, 490, 195, 500, 218, 553, 245, 582, 128, 650, 88, 680, 135, 702, 150, 715, 168, 680, 178, 718, 200, 795, 215, 792, 238, 785, 262, 786, 270, 820, 248, 825, 288, 818, 110, 843, 118, 802, 610, 50, 627, 40, 608, 102, 842, 46, 884, 40, 748, 244, 748, 258, 912, 308, 495, 272, 910, 368, 1415, 38, 1130, 60, 1140, 70, 1165, 66, 1145, 92, 1172, 85, 1085, 138, 1115, 130, 1135, 136, 1072, 214, 1110, 212, 1190, 265, 1362, 412, 1215, 325, 1378, 560, 1405, 595, 1365, 620, 1378, 618, 1390, 640, 1372, 648, 1290, 628, 1305, 640, 1328, 656, 1335, 678, 1305, 692, 1322, 702, 1350, 712, 1348, 730, 1380, 752, 1418, 735, 1420, 760, 412, 52, 400, 75, 408, 92, 440, 45, 462, 60, 468, 75, 452, 92, 465, 100, 480, 102, 460, 122, 432, 160, 433, 182, 385, 195, 385, 222, 388, 258, 405, 258, 378, 283, 340, 178, 355, 180, 370, 108, 1405, 870, 1418, 885, 1290, 850, 1310, 870];
const SPOTS_LOW = [88, 80, 100, 97, 72, 175, 88, 200, 102, 212, 205, 128, 205, 150, 215, 217, 333, 214, 343, 244, 158, 386, 170, 398, 111, 472, 113, 500, 145, 570, 241, 418, 502, 413, 515, 431, 546, 486, 684, 125, 665, 163, 742, 403, 780, 318, 779, 342, 779, 352, 853, 86, 868, 86, 880, 98, 878, 188, 832, 550, 832, 568, 867, 565, 875, 580, 838, 604, 756, 577, 698, 572, 895, 478, 1055, 132, 1060, 152, 1042, 185, 1060, 188, 1065, 205, 1062, 225, 1078, 238, 1048, 280, 1090, 325, 1180, 155, 1195, 170, 1170, 185, 1135, 200, 1140, 215, 1110, 262, 1120, 285, 1185, 320, 1165, 345, 1180, 362, 1195, 370, 1205, 372, 1220, 410, 1238, 400, 1255, 410, 1278, 408, 1302, 392, 1310, 410, 1330, 410, 1385, 415, 1412, 130, 1413, 110, 1360, 125, 1333, 118, 1325, 140, 1290, 226, 1250, 240, 1230, 262, 1270, 212, 1265, 200, 1285, 180, 1200, 255, 1418, 520, 1420, 548, 1388, 535, 1400, 530, 1340, 525, 1315, 510, 1258, 506, 1268, 588, 1242, 598, 1280, 630, 1300, 578, 1235, 658, 1265, 680, 1295, 695, 1325, 722, 1345, 738, 1360, 760, 932, 550, 948, 530, 960, 515, 985, 455, 1010, 455, 1015, 480, 1040, 450, 1062, 450, 960, 545, 915, 645, 928, 640, 880, 685, 900, 675, 1118, 680, 1100, 645, 1060, 625, 1085, 625, 1110, 620, 1085, 605, 1065, 590, 1030, 668, 1030, 690, 942, 755, 900, 800, 897, 838, 970, 832, 1020, 818, 730, 858, 745, 855, 800, 750, 832, 738, 1412, 287];
const GREEN_TOP = ["1342,880 1375,842 1395,815 1420,793 1420,808 1390,840 1362,858", "1360,885 1385,862 1392,868 1362,905", "1410,82 1418,80 1420,86 1412,88", "48,856 56,852 62,860 52,868", "1168,82 1176,82 1174,90", "1166,140 1172,152 1168,160", "1166,128 1172,130 1170,136", "355,56 361,56 359,62", "290,364 297,364 295,372", "1104,48 1108,50 1105,53", "1227,134 1230,134 1229,138", "684,175 688,176 686,180"];
const GREEN_LOW = [
  "775,832 782,800 798,772 822,755 858,735 870,715 900,695 925,672 952,650 955,625 975,602 990,575 1005,565 1015,552 1028,552 1030,575 1018,600 1024,628 1005,635 990,655 975,652 972,680 960,690 935,704 905,722 890,732 862,738 852,765 842,785 815,808",
  "745,878 778,868 795,840 818,820 844,818 842,845 824,860 820,880", "1112,462 1135,440 1150,426 1185,426 1195,436 1225,436 1265,430 1290,438 1320,434 1345,442 1375,435 1420,431 1421,492 1400,500 1360,503 1310,497 1270,490 1225,494 1225,502 1200,500 1190,485 1150,488 1135,478",
  "1042,575 1052,535 1062,485 1072,490 1072,525 1082,550 1070,572 1062,588 1052,575", "1083,540 1088,510 1098,500 1110,520", "1106,502 1113,475 1130,462 1145,472 1140,490 1125,508", "1078,465 1085,430 1105,425 1092,455", "1075,425 1082,395 1100,372 1116,368 1100,395 1088,410",
  "1143,285 1148,250 1160,228 1175,212 1192,212 1192,224 1165,248", "1228,165 1240,145 1265,120 1285,98 1300,66 1308,72 1295,112 1262,150", "1268,168 1285,130 1300,100 1322,90 1312,128 1290,165", "1340,22 1365,-2 1390,-10 1388,4 1355,28", "1155,320 1160,285 1182,258 1188,272 1172,295", "1228,218 1250,190 1262,192 1240,222", "1195,240 1215,225 1222,232",
  "845,820 858,790 878,775 882,790 858,822", "1110,345 1122,336 1128,350 1115,358", "1198,200 1212,178 1222,182 1205,208", "1362,50 1380,35 1385,42 1368,58", "1210,235 1230,218 1236,226", "840,570 850,570 850,576", "732,880 742,862 748,866 740,880", "918,745 930,738 930,745", "885,765 895,768 890,776", "1372,806 1378,812 1374,818", "1384,830 1392,838 1388,842",
];

const toMap = (x, y, low) => [77 + x / 3, (low ? 285 : 0) + y / 3];

const smooth = (pts) => {
  const mid = (a, b) => [(a[0] + b[0]) / 2, (a[1] + b[1]) / 2];
  const f = (p) => `${p[0].toFixed(1)} ${p[1].toFixed(1)}`;
  const n = pts.length;
  let d = `M${f(mid(pts[n - 1], pts[0]))}`;
  pts.forEach((p, i) => { d += `Q${f(p)} ${f(mid(p, pts[(i + 1) % n]))}`; });
  return d + "Z";
};

const ribbon = (f, low, rnd) => {
  const up = [];
  const down = [];
  for (let i = 0; i + 5 < f.length; i += 3) {
    const [x0, y0, w0, x1, y1, w1] = f.slice(i, i + 6);
    const len = Math.hypot(x1 - x0, y1 - y0);
    const n = Math.max(2, Math.round(len / 8));
    const nx = -(y1 - y0) / len;
    const ny = (x1 - x0) / len;
    for (let k = 0; k < n; k++) {
      const t = k / n;
      const w = w0 + (w1 - w0) * t;
      const half = w / 2;
      const a = half + (rnd() - 0.4) * Math.min(13, 3 + w * 0.3);
      const b = half + (rnd() - 0.4) * Math.min(13, 3 + w * 0.3);
      const cx = x0 + (x1 - x0) * t;
      const cy = y0 + (y1 - y0) * t;
      up.push(toMap(cx + nx * a, cy + ny * a, low));
      down.unshift(toMap(cx - nx * b, cy - ny * b, low));
    }
    if (i + 6 >= f.length) up.push(toMap(x1 + nx * w1 / 2, y1 + ny * w1 / 2, low), toMap(x1 - nx * w1 / 2, y1 - ny * w1 / 2, low));
  }
  return smooth(up.concat(down));
};

const spots = (list, low, rnd) => {
  const out = [];
  for (let i = 0; i < list.length; i += 2) {
    const [x, y] = toMap(list[i], list[i + 1], low);
    out.push({ x, y, rx: 1.3 + rnd() * 1.7, ry: 1 + rnd() * 0.9, a: Math.floor(rnd() * 180) });
  }
  return out;
};

/* gullies that branch off both sides of the main channel and of the green valley */
const gullies = (rnd) => {
  const lines = [[[1290, 100], [1160, 270], 0.8, 24], [[1050, 500], [800, 790], 0.45, 30], [[1400, -40], [1290, 100], 0.8, 20], [[1160, 495], [1415, 505], 0.35, 8], [[240, 60], [330, 340], 0.9, 10], [[970, 490], [1110, 590], 0.7, 18]];
  const out = [];
  lines.forEach(([[x0, y0], [x1, y1], k, n]) => {
    const len = Math.hypot(x1 - x0, y1 - y0);
    const low = x0 !== 240;
    for (let i = 0; i < n; i++) {
      const t = rnd();
      const side = rnd() > 0.5 ? 1 : -1;
      const d = side * (28 + rnd() * 48 * k);
      const nx = -(y1 - y0) / len;
      const ny = (x1 - x0) / len;
      const [x, y] = toMap(x0 + (x1 - x0) * t + nx * d, y0 + (y1 - y0) * t + ny * d, low);
      out.push({ x, y, rx: 2 + rnd() * 3.4, ry: 1.1 + rnd() * 1.2, a: Math.floor((Math.atan2(ny, nx) * 180) / Math.PI + (rnd() - 0.5) * 80) });
    }
  });
  return out;
};

const green = (pts, low) => smooth(pts.split(" ").flatMap((p, i, all) => {
  const [x, y] = p.split(",").map(Number);
  const [u, v] = all[(i + 1) % all.length].split(",").map(Number);
  return [toMap(x, y, low), toMap(x + (u - x) * 0.3, y + (v - y) * 0.3, low), toMap(x + (u - x) * 0.7, y + (v - y) * 0.7, low)];
}));

const rnd = makeRandom(41);
const FLOW_PATH = FLOWS_TOP.map((f) => ribbon(f, false, rnd)).concat(FLOWS_LOW.map((f) => ribbon(f, true, rnd)));
const ISLANDS = spots(SPOTS_TOP, false, rnd).concat(spots(SPOTS_LOW, true, rnd), gullies(rnd));

const MapSheet = ({ id }) => (
  <Svg width="646" height="605" viewBox="0 0 646 605">
    <defs>
      <pattern id={id} width="4" height="4" patternUnits="userSpaceOnUse">
        <rect width="4" height="4" fill="#929292" />
        <rect width="1" height="1" fill="#fff" />
        <rect x="2" y="2" width="1" height="1" fill="#fff" />
      </pattern>
      <clipPath id={`${id}-edge`}><rect x="80" y="11" width="471" height="568" /></clipPath>
    </defs>
    <g clipPath={`url(#${id}-edge)`}>
      <g fill={`url(#${id})`} stroke="#555" strokeWidth=".9" strokeLinejoin="round">
        {ISLANDS.map((s, i) => <ellipse key={i} rx={s.rx} ry={s.ry} transform={`translate(${s.x.toFixed(1)} ${s.y.toFixed(1)}) rotate(${s.a})`} />)}
        {FLOW_PATH.map((d, i) => <path key={i} d={d} />)}
      </g>
      <g fill="#1be40d" stroke="#2f9a28" strokeWidth=".4">
        {GREEN_TOP.map((g, i) => <path key={i} d={green(g, false)} />)}
        {GREEN_LOW.map((g, i) => <path key={i} d={green(g, true)} />)}
      </g>
      <g fill="#fff" stroke="#666" strokeWidth=".5">
        <path d="M379 520c0-3 4-5 3 0l-1 4zM385 524l8-4-2 3-6 3zM397 503l3-3 3 2-3 5zM406 501l3-4 1 4z" />
        <ellipse cx="383" cy="515.500" rx="2" ry="1.500" fill="#929292" />
      </g>
    </g>
  </Svg>
);

/* ---------- style dock ---------- */

const StyleDock = styled.aside`
  flex: 1;
  padding: 0 4px 0 11px;
  display: flex;
  flex-direction: column;
`;
const Combo = styled.div`
  flex: ${(p) => (p.$w ? "none" : 1)};
  ${(p) => p.$w && `width: ${p.$w}px;`}
  height: ${(p) => p.$h || 24}px;
  display: flex;
  align-items: center;
  gap: 5px;
  padding: 0 ${(p) => p.$pr ?? 3}px 0 ${(p) => p.$pl ?? 3}px;
  border: 1px solid #2b2b2b;
  background: linear-gradient(#464646, #545454 50%, #4b4b4b);
  color: #e6e6e6;
  white-space: nowrap;
  font-size: ${(p) => p.$fs || 12}px;
  & > span { flex: 1; text-align: ${(p) => (p.$center ? "center" : "left")}; }
  & > ${Caret} { width: 6px; }
`;
const Line = styled.div`
  flex: none;
  display: flex;
  align-items: center;
  margin-top: ${(p) => p.$mt || 0}px;
  gap: ${(p) => p.$gap || 0}px;
`;
const FieldLabel = styled.label`
  flex: none;
  width: 101px;
  white-space: nowrap;
`;
const Ghost = styled.em`
  flex: none;
  width: 16px;
  font: 8px "DejaVu Sans", sans-serif;
  color: #5c5c5c;
`;
const StyleMain = styled.div`
  flex: 1;
  min-height: 0;
  margin-top: 6px;
  display: flex;
  gap: 4px;
`;
const Rail = styled.div`
  flex: none;
  width: 35px;
  margin: 1px 0 0 1px;
  height: 527px;
  background: #212121;
`;
const RailItem = styled.div`
  height: ${(p) => (p.$on ? 23 : 22)}px;
  width: 34px;
  padding-left: ${(p) => (p.$on ? 5 : 3)}px;
  display: flex;
  align-items: center;
  border-top: ${(p) => (p.$on ? "1px solid #212121" : 0)};
  background: ${(p) => (p.$on ? "#00f" : "transparent")};
`;
const StyleForm = styled.div`
  flex: 1;
  display: flex;
  flex-direction: column;
`;
const Button = styled.button`
  flex: none;
  width: ${(p) => p.$w}px;
  height: ${(p) => p.$h || 24}px;
  padding: 0 0 0 ${(p) => (p.$off ? 4 : 0)}px;
  display: flex;
  align-items: center;
  justify-content: ${(p) => (p.$off ? "flex-start" : "center")};
  gap: ${(p) => p.$gap || 0}px;
  border: 1px solid #2a2a2a;
  background: #000;
  color: ${(p) => (p.$off ? "#444" : "#efefef")};
  font: 12px/14px "DejaVu Sans", sans-serif;
  white-space: nowrap;
  margin-left: ${(p) => (p.$push ? "auto" : 0)};
  u { text-underline-offset: 3px; }
`;
const LowCaret = styled.i`
  align-self: flex-end;
  margin-bottom: 4px;
  border: 4px solid transparent;
  border-top: 4px solid #aaa;
  border-bottom: 0;
`;
const Epsilon = styled.span`
  font: 17px/18px "DejaVu Sans", sans-serif;
  color: #6d3a76;
`;
const Ramp = styled.i`
  flex: 1;
  height: 8px;
  margin: 0 1px 2px -1px;
  background: #2168f2;
`;
const Table = styled.div`
  flex: none;
  height: 317px;
  margin: 7px 1px 0 1px;
  border: 1px solid #2b2b2b;
  background: #212121;
`;
const Grid = styled.div`
  display: grid;
  grid-template-columns: ${(p) => (p.$head ? "66px 111px 1fr" : "21px 46px 111px 1fr")};
  align-items: center;
  height: ${(p) => (p.$head ? 21 : 24)}px;
  margin: 1px 1px 0 1px;
  ${(p) => p.$head
    ? css`background: #000; padding: 0 0 4px 3px;`
    : css`margin: 0 2px 0 0; padding-left: 2px; border-top: 1px solid #333; color: #bdbdbd; border-bottom: ${p.$last ? "1px solid #333" : 0};`}
  span { white-space: nowrap; padding-bottom: ${(p) => (p.$head ? 0 : p.$last ? 2 : 4)}px; display: flex; align-items: center; gap: 2px; }
`;
const SortMark = styled.i`
  border: 3px solid transparent;
  border-top: 6px solid #888;
  border-bottom: 0;
`;
const Section = styled.h3`
  flex: none;
  margin: 8px 0 0;
  height: 16px;
  padding-left: 8px;
  display: flex;
  align-items: center;
  gap: 9px;
  font: bold 12px/16px "DejaVu Sans", sans-serif;
  &::before { content: ""; border: 4px solid transparent; border-left: 5px solid #4c4c4c; border-right: 0; }
`;
const CheckBox = styled.i`
  flex: none;
  width: 12px;
  height: 12px;
  margin-left: ${(p) => p.$ml || 0}px;
  background: ${(p) => (p.$on ? "#117204" : "#555")};
`;
const Live = styled.span`
  margin: 0 2px 0 auto;
  display: flex;
  gap: 7px;
  align-items: center;
`;
const Tabs = styled.div`
  flex: none;
  height: 28px;
  display: flex;
  gap: 26px;
  padding: 10px 0 0 9px;
  white-space: nowrap;
  span + span { margin-top: -2px; }
`;

const StylePanel = ({ full }) => (
  <StyleDock>
    <DockTitle $r={-1}><DockName $r={15}>Estilo de capas</DockName><Icon name="float" size={11} /></DockTitle>
    <Line $mt={1}><Combo><Icon name="poly" /><span>Huaycos Huayco_Tacna</span><Caret /></Combo></Line>
    <StyleMain>
      <Rail>
        {["brushSel", "tagYellow", "cube", "diagram", "history"].map((n, i) => <RailItem key={n} $on={i === 0}><Icon name={n} size={i ? 16 : 15} /></RailItem>)}
      </Rail>
      <StyleForm>
        <Line><Combo $pl={4}><Icon name="categories" /><span>Categorizado</span><Caret /></Combo></Line>
        <Line $mt={6}><FieldLabel>Valor</FieldLabel><Combo $w={196} $pl={4}><Ghost>abc</Ghost><span>Clase</span><Caret /></Combo><Button $w={25} $push><Epsilon>ε</Epsilon></Button></Line>
        <Line $mt={7}><FieldLabel>Símbolo</FieldLabel><Combo $h={21} $pr={2}><Ramp /><Caret /></Combo></Line>
        <Line $mt={6}><FieldLabel>Rampa de color</FieldLabel><Combo $h={28} $pr={2} $center><span>Random colors</span><Caret /></Combo></Line>
        <Table>
          <Grid $head><span>Símbolo<SortMark /></span><span>Valor</span><span>Leyenda</span></Grid>
          <Grid><Icon name="eye" /><Swatch $s={16} /><span>Flujo de dentritos</span><span>Flujo de dentritos</span></Grid>
          <Grid $last><Icon name="eye" /><Swatch $s={16} $green /><span>Vegetación</span><span>Vegetación</span></Grid>
        </Table>
        {full && (
          <>
            <Line $mt={5} $gap={6}>
              <Button $w={64}>Clasificar</Button><Button $w={28}><Icon name="plus" /></Button><Button $w={28}><Icon name="minus" /></Button><Button $w={77}>Borrar todo</Button>
              <Button $w={79} $push $gap={4}>Avanzado<LowCaret /></Button>
            </Line>
            <Section>Representación de capas</Section>
            <Line $mt={9} $gap={6}>
              <Button $w={25} $h={25}><Icon name="undoOrange" size={14} /></Button><Button $w={25} $h={25}><Icon name="redoGreen" size={14} /></Button>
              <Live><CheckBox $on />Actualización en vivo</Live>
              <Button $w={70} $gap={5}><Icon name="check" size={13} />Aplicar</Button>
            </Line>
          </>
        )}
      </StyleForm>
    </StyleMain>
    {full && <Tabs><span>Caja de herramientas de Procesos</span><span>Estilo de capas</span></Tabs>}
  </StyleDock>
);

/* ---------- status bar ---------- */

const StatusBar = styled.footer`
  flex: none;
  height: 30px;
  display: flex;
  align-items: center;
  padding: 1px 0 0 5px;
  font-size: 9px;
  white-space: nowrap;
`;
const Locator = styled.div`
  flex: none;
  width: 324px;
  height: 22px;
  display: flex;
  align-items: center;
  gap: 9px;
  padding-left: 6px;
  font-size: 12px;
  background: #868686;
  border: 1px solid #5e5e5e;
  color: #4b4b4b;
`;
const Tag = styled.span`
  flex: none;
  width: ${(p) => p.$w}px;
  padding-left: ${(p) => p.$pl || 0}px;
`;
const Coordinates = styled.span`
  flex: none;
  width: 92px;
  height: 21px;
  line-height: 17px;
  text-align: center;
  font-size: 9px;
  background: #868686;
  border: 1px solid #555;
  color: #262626;
`;
const Gap = styled.i`
  flex: none;
  width: ${(p) => p.$w}px;
  display: flex;
  justify-content: center;
`;
const Steps = styled.i`
  display: flex;
  flex-direction: column;
  gap: 7px;
  &::before, &::after { content: ""; border: 2px solid transparent; }
  &::before { border-bottom: 4px solid #999; border-top: 0; }
  &::after { border-top: 4px solid #999; border-bottom: 0; }
`;

const Status = ({ full }) => (
  <StatusBar>
    <Locator><Icon name="search" size={14} />Escriba para localizar (Ctrl+K)</Locator>
    {full && (
      <>
        <Gap $w={159} /><Tag $w={58}>Coordenada</Tag><Coordinates>338491,8069935</Coordinates>
        <Gap $w={27}><Icon name="mouse" size={15} /></Gap>
        <Tag $w={40} $pl={8}>Escala</Tag><Combo $w={103} $fs={9.5} $pl={5}><span>1:64848</span><Caret /></Combo>
        <Gap $w={34}><Icon name="lock" size={15} /></Gap>
        <Tag $w={60}>Amplificador</Tag><Combo $w={95} $fs={9} $pl={4}><span>100%</span><Steps /></Combo>
        <Tag $w={58} $pl={9}>Rotación</Tag><Combo $w={91} $fs={9} $pl={4}><span>0.0 °</span><Steps /></Combo>
        <Gap $w={7} /><CheckBox $on /><Tag $w={75} $pl={7}>Representar</Tag>
        <Gap $w={17}><Icon name="crs" size={14} /></Gap><Tag $w={78} $pl={1}>EPSG:32719</Tag><Icon name="bubble" size={16} />
      </>
    )}
  </StatusBar>
);

/* ---------- dialogs ---------- */

const Dialog = styled.section`
  position: absolute;
  left: ${(p) => p.$x}px;
  top: ${(p) => p.$y}px;
  width: ${(p) => p.$w}px;
  height: ${(p) => p.$h}px;
  border: 1px solid #777;
  border-top: 0;
  border-radius: 6px 6px 0 0;
  background: #000;
  box-shadow: 0 5px 18px 1px rgba(0, 0, 0, 0.6);
`;
const DialogTitle = styled(TitleBar)`
  height: ${(p) => p.$h}px;
  border-radius: 6px 6px 0 0;
  padding: 2px 8px 0 8px;
  box-shadow: none;
`;
const PackageBody = styled.div`
  padding: 12px 12px 0;
  display: flex;
  flex-direction: column;
  align-items: center;
  gap: 8px;
`;
const LayerList = styled.div`
  width: 468px;
  height: 370px;
  background: #212121;
`;
const LayerItem = styled.div`
  height: 30px;
  display: flex;
  align-items: center;
  gap: 7px;
  padding-left: 4px;
  border-bottom: 1px solid #1a1a1a;
  letter-spacing: 0.06px;
`;
const Tick = styled.i`
  width: 13px;
  height: 13px;
  display: flex;
  border: 1px solid #1d1d1d;
  color: #f3f3f3;
`;
const Form = styled.div`
  padding: 11px 11px 0 11px;
  display: flex;
  flex-direction: column;
`;
const Input = styled.div`
  flex: none;
  width: ${(p) => p.$w}px;
  height: ${(p) => p.$h}px;
  padding: 3px 0 0 1px;
  white-space: nowrap;
  overflow: hidden;
  background: #868686;
  border: 1px solid ${(p) => (p.$focus ? "#b67a32" : "#2c2c2c")};
  color: #202020;
`;
const Grow = styled.span`
  flex: 1;
  white-space: nowrap;
`;

const Package = () => (
  <Dialog $x={437} $y={82} $w={494} $h={440}>
    <DialogTitle $h={23}><Icon name="chevron" size={12} /><TitleText>QPackage</TitleText><Buttons><Icon name="winMax" size={12} /><Icon name="winClose" size={12} /></Buttons></DialogTitle>
    <PackageBody>
      <Button $w={210} $h={22}>Load layers of the current project</Button>
      <LayerList><LayerItem><Tick><Icon name="check" size={12} /></Tick>Huaycos Huayco_Tacna</LayerItem></LayerList>
    </PackageBody>
  </Dialog>
);

const Consolidate = () => (
  <Dialog $x={638} $y={698} $w={329} $h={180}>
    <DialogTitle $h={24}><Icon name="chevron" size={12} /><TitleText>QConsolidate3</TitleText><Buttons><Icon name="winMax" size={12} /><Icon name="winClose" size={12} /></Buttons></DialogTitle>
    <Form>
      <Line $gap={7}><Grow>Project name</Grow><Input $w={219} $h={23} $focus /></Line>
      <Line $mt={6}><Grow>Output directory</Grow><Input $w={128} $h={23}>Descargas/HANSGIS</Input><Gap $w={7} /><Button $w={64} $h={23}>Browse...</Button></Line>
      <Line $mt={6}><Combo $h={23}><span>SHP</span><Caret /></Combo></Line>
      <Line $mt={7} $gap={7}><CheckBox $ml={1} />Consolidate in a Zip file</Line>
      <Line $mt={7} $gap={6}><Button $w={81} $push $gap={6}><Icon name="cross" size={12} /><span><u>C</u>ancelar</span></Button><Button $w={75} $off><Icon name="check" size={13} /></Button></Line>
    </Form>
  </Dialog>
);

const Qgis = ({ x, y, full, title, id }) => (
  <Frame $x={x} $y={y} $cropped={full}>
    <TitleBar>{title && <><Icon name="winMenu" size={12} /><TitleText $bold>{title}</TitleText><Buttons><Icon name="winMin" size={12} /><Icon name="winMax" size={12} /><Icon name="winClose" size={12} /></Buttons></>}</TitleBar>
    <MenuBar>{MENU.map(([a, b, c]) => <MenuItem key={a + b + c}>{a}<u>{b}</u>{c}</MenuItem>)}</MenuBar>
    <Toolbar items={MAIN_TOOLS + (full ? " drawer |7" : " |7")} h={29} lift={1} />
    <Toolbar items={EDIT_TOOLS} h={32} lift={1} />
    <Body><Layers /><MapView><MapSheet id={id} /></MapView><StylePanel full={full} /></Body>
    <Status full={full} />
  </Frame>
);

export default function App() {
  return (
    <>
      <Global />
      <Desktop>
        <Qgis x={0} y={0} id="dots-a" title="*Proyecto sin título - QGIS [AntonyBarja]" />
        <Package />
        <Qgis x={132} y={468} id="dots-b" full />
        <Consolidate />
      </Desktop>
    </>
  );
}
